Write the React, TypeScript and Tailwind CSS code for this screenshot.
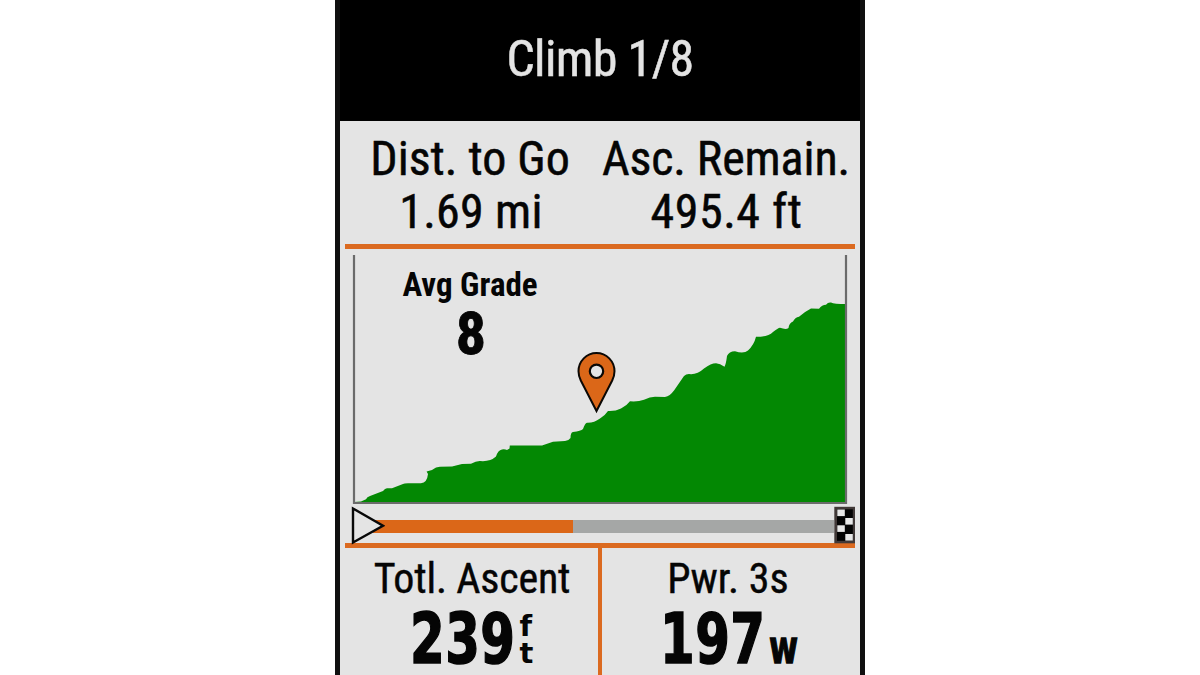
import React from "react";

const CONDENSED = "[font-family:'Roboto_Condensed',Roboto,sans-serif] [font-stretch:75%]";
const HEAVY = "[font-family:'DejaVu_Sans',sans-serif] font-bold";

function Label({ className, children }: { className: string; children: React.ReactNode }) {
  return <span className={`block whitespace-nowrap ${CONDENSED} ${className}`}>{children}</span>;
}

function Reading({ children }: { children: React.ReactNode }) {
  return (
    <span className="block w-[106px] shrink-0">
      <span className="block w-[149px] origin-left scale-x-[0.713] text-[70px] leading-[71px] tracking-[0.6px] [-webkit-text-stroke:1.6px_#050505]">
        {children}
      </span>
    </span>
  );
}

const PROFILE =
  "M354 502 L361 501.5 L366 499.2 Q367 496.8 370 496 L383 491 Q385 488.4 387 488.3 L392 488.2 L403 484 Q404 483.3 408 483.3 L421 483.3 Q427 483 428 474 L426.6 471.5 L432 470 Q436 466.8 440 466.7 L452 466.5 L462 464 L471 463.8 Q476 460.9 480 461 Q490 462 496 456.5 Q498 450 502 449.4 Q505 449 507 450 L509.5 448.5 L509.8 445.4 L542 445.4 L553 441.7 L565 441 Q569 440.5 570.5 438 Q570.5 432.5 573 432 Q581 431 583 429 Q585 423 587 422.7 Q594 423 600 418.5 Q605 415.5 608 411 Q615 411.5 621 408.5 Q627 405.5 630 401.3 Q638 402 644 399.7 Q650 397 655 396.8 L665 397 Q670 396 674 390.5 L684 376 Q686 374 689 374 Q697 375 704 368.5 Q711 363.3 716 363.3 Q720 363.5 724.5 366.7 Q726 364 727 356 Q729 351.5 735 351.3 Q744 354 748 350.5 Q754 345 756 336.8 Q768 337 773 332 Q778 328 780 327.8 Q786 330 788.5 328 Q789 323 793 321.5 Q795 317.5 799 316.8 Q805 311.5 811 308.5 L819 308.7 Q822 305 826 304.8 Q828 302 831 302.5 Q834 304 846 304 L846 503 L354 503 Z";

function ElevationChart() {
  return (
    <svg className="block h-[256px] w-[510px]" viewBox="345 249 510 256">
      <path d={PROFILE} fill="#038803" />
      <path d="M354 255V503H846V255" fill="none" stroke="#6b6b6b" strokeWidth="2.2" />
      <path
        d="M596.5 411L580.8 380.5C579.3 377.4 578.5 374.5 578.5 371.3a18 18.3 0 0 1 36 0C614.5 374.5 613.7 377.4 612.2 380.5Z"
        fill="#db6718"
        stroke="#0b0805"
        strokeWidth="2"
      />
      <circle cx="596.5" cy="371.3" r="6.7" fill="#e4e4e4" stroke="#0b0805" strokeWidth="2.2" />
    </svg>
  );
}

function StartIcon() {
  return (
    <svg className="relative h-[40px] w-[36px] shrink-0" viewBox="349 505 36 40">
      <path d="M353 508.5V542.5L383 525.7Z" fill="#e4e4e4" stroke="#080808" strokeWidth="2.4" />
    </svg>
  );
}

function FinishIcon() {
  const light = [
    [837.3, 509.5],
    [845.3, 518],
    [837.3, 525.3],
    [845.3, 534],
  ];
  return (
    <svg className="relative h-[40px] w-[21px] shrink-0" viewBox="834 505 21 40">
      <rect x="834.3" y="506.8" width="20.7" height="36.5" fill="#413938" />
      <rect x="837" y="509.3" width="15.8" height="31.5" fill="#030303" />
      {light.map(([x, y]) => (
        <rect key={y} x={x} y={y} width="7.5" height="6.6" fill="#e8e8e8" />
      ))}
    </svg>
  );
}

export default function App() {
  return (
    <div className="flex h-[675px] w-[1200px] justify-center overflow-hidden bg-white">
      <main className="flex h-full w-[530px] flex-col border-x-[5px] border-[#101010] bg-[#e4e4e4] text-[#050505]">
        <header className="flex h-[120.5px] shrink-0 items-center justify-center bg-black pb-[2px]">
          <Label className="text-[50px] leading-[50px] tracking-[-0.65px] text-[#e4e4e4] [-webkit-text-stroke:0.5px_#e4e4e4]">
            Climb 1/8
          </Label>
        </header>

        <section className="flex h-[123.5px] shrink-0 pt-[11.5px] [-webkit-text-stroke:0.5px_#050505]">
          <div className="flex w-[260px] flex-col items-center">
            <Label className="text-[48px] leading-[53px]">Dist. to Go</Label>
            <Label className="pl-[2px] text-[48px] leading-[53px] tracking-[0.2px]">1.69 mi</Label>
          </div>
          <div className="flex w-[252px] flex-col items-center">
            <Label className="text-[48px] leading-[53px] tracking-[-0.1px]">Asc. Remain.</Label>
            <Label className="pl-[1px] text-[48px] leading-[53px] tracking-[0.5px]">495.4 ft</Label>
          </div>
        </section>

        <div className="mx-[5px] h-[5px] shrink-0 bg-[#db6a20]" />

        <section className="relative mx-[5px] h-[256px] shrink-0">
          <ElevationChart />
          <div className="absolute left-[45px] top-[17px] flex w-[160px] flex-col items-center">
            <Label className="text-[33px] font-bold leading-[38px]">Avg Grade</Label>
            <Label className="pl-[2px] text-[60px] font-bold leading-[60px] [-webkit-text-stroke:0.8px_#050505]">8</Label>
          </div>
        </section>

        <section className="mx-[5px] flex h-[38px] shrink-0 items-start pl-[4px]">
          <StartIcon />
          <div className="-ml-[12px] mt-[15px] h-[13px] w-[200px] bg-[#db6718]" />
          <div className="mt-[15px] h-[13px] flex-1 bg-[#a5a7a6]" />
          <FinishIcon />
        </section>

        <div className="mx-[5px] h-[5px] shrink-0 bg-[#db6a20]" />

        <section className="flex min-h-0 flex-1">
          <div className="w-[258px] pt-[5.5px]">
            <Label className="pl-[6px] text-center text-[42px] leading-[50px] tracking-[-0.2px] [-webkit-text-stroke:0.4px_#050505]">
              Totl. Ascent
            </Label>
            <div className={`flex h-[71px] items-start pl-[70px] ${HEAVY}`}>
              <Reading>239</Reading>
              <span className="ml-[3.5px] flex flex-col pt-[9px] text-[29px] leading-[27px]">
                <span className="block h-[27px]">f</span>
                <span className="block h-[27px]">t</span>
              </span>
            </div>
          </div>
          <div className="w-[4px] bg-[#db6a20]" />
          <div className="flex-1 pt-[5.5px]">
            <Label className="pr-[6px] text-center text-[42px] leading-[50px] [-webkit-text-stroke:0.4px_#050505]">
              Pwr. 3s
            </Label>
            <div className={`flex h-[71px] items-baseline pl-[57.5px] ${HEAVY}`}>
              <Reading>197</Reading>
              <span className="ml-[3.5px] block w-[30px] origin-left scale-x-[0.67] text-[47px] leading-[47px] [-webkit-text-stroke:1.4px_#050505]">
                w
              </span>
            </div>
          </div>
        </section>
      </main>
    </div>
  );
}
